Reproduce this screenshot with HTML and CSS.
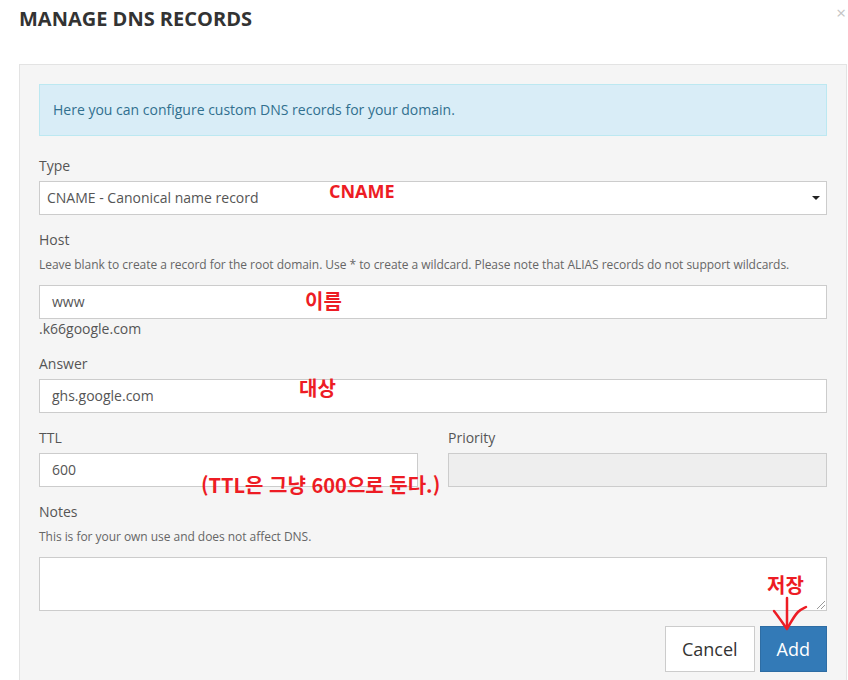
FILE: index.html
```html
<!DOCTYPE html>
<html lang="ko">
<head>
<meta charset="utf-8">
<title>Manage DNS Records</title>
<link rel="stylesheet" href="styles.css">
</head>
<body>
<div class="modal">
  <div class="modal-header">
    <h4 class="modal-title">MANAGE DNS RECORDS</h4>
    <span class="close">×</span>
  </div>
  <div class="panel">
    <div class="alert">Here you can configure custom DNS records for your domain.</div>

    <div class="form-group">
      <label class="label">Type</label>
      <div class="select">CNAME - Canonical name record<span class="caret"></span></div>
    </div>

    <div class="form-group">
      <label class="label">Host</label>
      <p class="help">Leave blank to create a record for the root domain. Use * to create a wildcard. Please note that ALIAS records do not support wildcards.</p>
      <div class="input">www</div>
      <div class="suffix">.k66google.com</div>
    </div>

    <div class="form-group">
      <label class="label">Answer</label>
      <div class="input">ghs.google.com</div>
    </div>

    <div class="row">
      <div class="form-group col">
        <label class="label">TTL</label>
        <div class="input">600</div>
      </div>
      <div class="form-group col">
        <label class="label">Priority</label>
        <div class="input disabled"></div>
      </div>
    </div>

    <div class="form-group">
      <label class="label">Notes</label>
      <p class="help">This is for your own use and does not affect DNS.</p>
      <div class="textarea"><span class="grip"></span></div>
    </div>

    <div class="actions">
      <button class="btn btn-default">Cancel</button>
      <button class="btn btn-primary">Add</button>
    </div>
  </div>

  <span class="note note-cname">CNAME</span>
  <span class="note note-host">이름</span>
  <span class="note note-answer">대상</span>
  <span class="note note-ttl">(TTL은 그냥 600으로 둔다.)</span>
  <span class="note note-save">저장</span>
  <svg class="arrow" width="50" height="40" viewBox="0 0 50 40">
    <path d="M18 2 L18 30" />
    <path d="M5 15 C9 20 13 26 18 33 C22 26 25 20 29 16 C32 13 35 12 37 11" />
  </svg>
</div>
</body>
</html>
```

FILE: styles.css
```css
* { box-sizing: border-box; }
html, body { margin: 0; padding: 0; background: #fff; }
body {
  font-family: "Open Sans", "Noto Sans CJK KR", sans-serif;
  font-size: 14px;
  line-height: 20px;
  color: #555;
  width: 848px;
  height: 680px;
  overflow: hidden;
}
.modal { position: relative; }
.modal-header {
  position: relative;
  height: 64px;
  padding: 6px 19px 0;
}
.modal-title {
  margin: 0;
  font-size: 20px;
  font-weight: 700;
  line-height: 26px;
  color: #333;
}
.close {
  position: absolute;
  right: 2px;
  top: 3px;
  font-size: 17px;
  line-height: 20px;
  color: #c4c4c4;
}
.panel {
  margin-left: 19px;
  width: 828px;
  background: #f5f5f5;
  border: 1px solid #e3e3e3;
  border-bottom: 0;
  padding: 19px 19px 20px;
}
.alert {
  background: #d9edf7;
  border: 1px solid #bce8f1;
  color: #31708f;
  padding: 15px 13px;
  line-height: 20px;
  margin-bottom: 20px;
}
.form-group { margin-bottom: 15px; }
.label {
  display: block;
  margin-bottom: 5px;
  color: #555;
  line-height: 20px;
}
.help {
  margin: 0 0 10px;
  font-size: 12px;
  line-height: 20px;
  color: #666;
  letter-spacing: -0.04px;
}
.select, .input {
  position: relative;
  height: 34px;
  background: #fff;
  border: 1px solid #ccc;
  line-height: 32px;
  color: #555;
}
.select { padding: 0 7px; }
.input { padding: 0 12px; }
.input.disabled { background: #eee; }
.caret {
  position: absolute;
  right: 6px;
  top: 14px;
  width: 0;
  height: 0;
  border-left: 4px solid transparent;
  border-right: 4px solid transparent;
  border-top: 4px solid #222;
}
.suffix {
  line-height: 20px;
  color: #555;
}
.row {
  display: flex;
  gap: 30px;
}
.col { flex: 1; }
.textarea {
  position: relative;
  height: 54px;
  background: #fff;
  border: 1px solid #ccc;
}
.grip {
  position: absolute;
  right: 1px;
  bottom: 1px;
  width: 8px;
  height: 8px;
  background: linear-gradient(135deg, transparent 45%, #999 45%, #999 52%, transparent 52%, transparent 70%, #999 70%, #999 77%, transparent 77%);
}
.actions {
  display: flex;
  justify-content: flex-end;
  gap: 5px;
}
.btn {
  font-family: "Open Sans", sans-serif;
  font-size: 18px;
  line-height: 25px;
  padding: 10px 16px;
  height: 46px;
  border: 1px solid;
  border-radius: 0;
  margin: 0;
}
.btn-default {
  background: #fff;
  border-color: #ccc;
  color: #333;
}
.btn-primary {
  background: #337ab7;
  border-color: #2e6da4;
  color: #fff;
}
.note {
  position: absolute;
  font-family: "Noto Sans CJK KR", "Open Sans", sans-serif;
  font-weight: 700;
  font-size: 20px;
  line-height: 22px;
  color: #ed1c24;
  white-space: nowrap;
}
.note-cname { left: 329px; top: 180px; font-family: "Open Sans", sans-serif; font-size: 18px; }
.note-host { left: 305px; top: 290px; }
.note-answer { left: 299px; top: 377px; }
.note-ttl { left: 201px; top: 474px; }
.note-save { left: 767px; top: 574px; }
.arrow {
  position: absolute;
  left: 769px;
  top: 596px;
  fill: none;
  stroke: #ed1c24;
  stroke-width: 2.5;
  stroke-linecap: round;
  stroke-linejoin: round;
}
```
